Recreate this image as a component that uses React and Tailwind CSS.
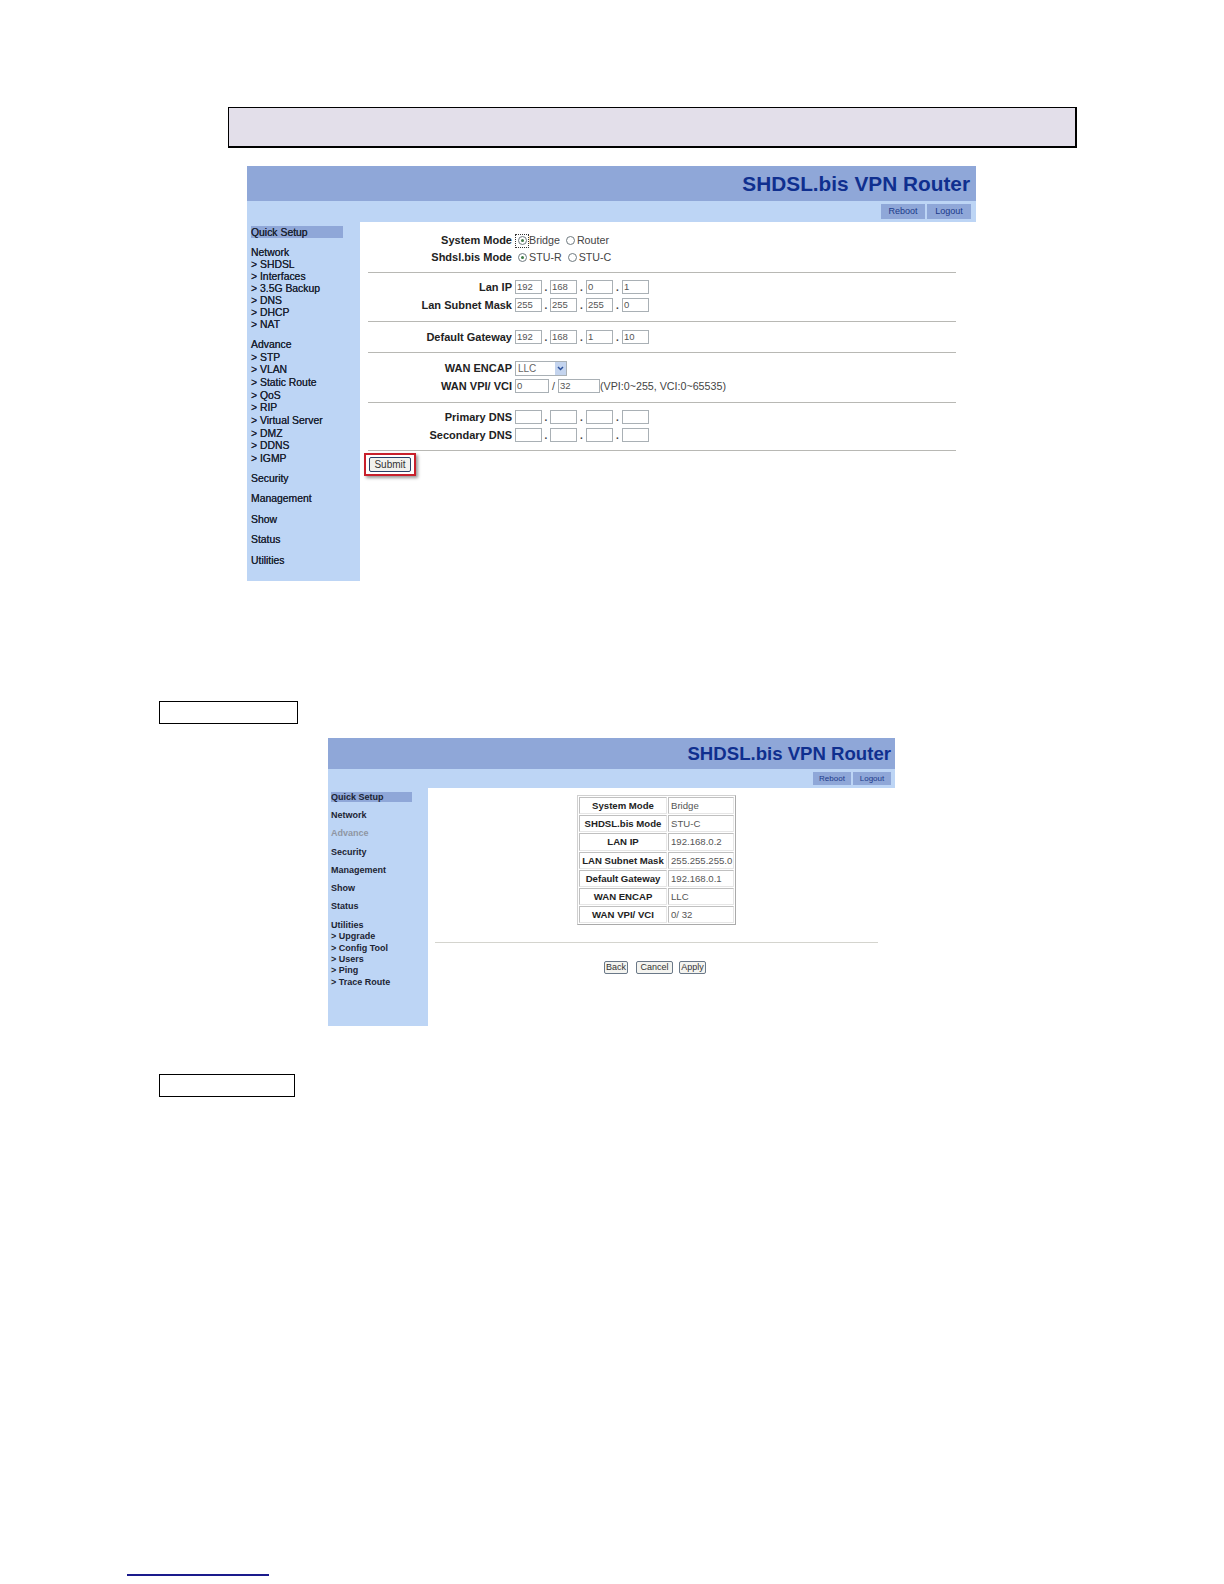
import React from "react";

const Divider = ({ className }) => <div className={`h-px w-[588px] bg-[#b8b8b4] ${className}`} />;

const Radio = ({ checked }) => (
    <span className="flex h-[9px] w-[9px] items-center justify-center rounded-full border border-[#6f7a80] bg-white">
        {checked && <span className="h-[3px] w-[3px] rounded-full bg-[#3f7a45]" />}
    </span>
);

const TextBox = ({ value, className = "w-[27px]" }) => (
    <div className={`h-[14px] border border-[#a9b0b5] bg-white pl-[1px] text-[9.5px] leading-[12px] text-[#555] ${className}`}>
        {value}
    </div>
);

const IpInput = ({ label, values = ["", "", "", ""] }) => (
    <div className="flex h-[18px] items-center">
        <div className="w-[144px] text-right text-[11px] font-bold text-[#222]">{label}</div>
        <div className="ml-[3px] flex items-center">
            <TextBox value={values[0]} />
            <span className="w-[8px] text-center text-[10px] font-bold">.</span>
            <TextBox value={values[1]} />
            <span className="w-[9px] text-center text-[10px] font-bold">.</span>
            <TextBox value={values[2]} />
            <span className="w-[9px] text-center text-[10px] font-bold">.</span>
            <TextBox value={values[3]} />
        </div>
    </div>
);

const SubItem = ({ children }) => <div>{"> "}{children}</div>;

const HeaderBar = ({ titleSize, headerHeight, barHeight, btnClass, titleClass, btnWidth, btnText }) => (
    <>
        <div className={`flex items-center justify-end bg-[#8fa7d8] ${headerHeight} ${titleClass}`}>
            <span className={`font-bold text-[#0f2f8f] ${titleSize}`}>SHDSL.bis VPN Router</span>
        </div>
        <div className={`flex items-center justify-end bg-[#bdd5f5] ${barHeight} ${btnClass}`}>
            <div className="flex h-full items-center gap-[2px]">
                <span className={`flex h-full items-center justify-center bg-[#8fa7d8] text-[#1c3a8a] ${btnWidth} ${btnText}`}>Reboot</span>
                <span className={`flex h-full items-center justify-center bg-[#8fa7d8] text-[#1c3a8a] ${btnWidth} ${btnText}`}>Logout</span>
            </div>
        </div>
    </>
);

const QuickSetupPage = () => (
    <div className="ml-[247px] mt-[18px] w-[729px]">
        <HeaderBar
            titleSize="text-[20.8px]"
            headerHeight="h-[35px]"
            barHeight="h-[21px] py-[3px]"
            btnClass="pr-[5px]"
            titleClass="pr-[6px]"
            btnWidth="w-[44px]"
            btnText="text-[9px]"
        />
        <div className="flex h-[359px]">
            {/* Sidebar */}
            <div className="w-[113px] bg-[#bdd5f5] pl-[4px] text-[10.4px] text-[#1c2433] [text-shadow:0_0_0.6px_#1c2433]">
                <div className="mt-[4px] h-[12px] w-[92px] bg-[#8fa7d8] pt-[1px] leading-[12px]">Quick Setup</div>
                <div className="mt-[9px] leading-[12px]">
                    <div>Network</div>
                    <SubItem>SHDSL</SubItem>
                    <SubItem>Interfaces</SubItem>
                    <SubItem>3.5G Backup</SubItem>
                    <SubItem>DNS</SubItem>
                    <SubItem>DHCP</SubItem>
                    <SubItem>NAT</SubItem>
                </div>
                <div className="mt-[8px] leading-[12.67px]">
                    <div>Advance</div>
                    <SubItem>STP</SubItem>
                    <SubItem>VLAN</SubItem>
                    <SubItem>Static Route</SubItem>
                    <SubItem>QoS</SubItem>
                    <SubItem>RIP</SubItem>
                    <SubItem>Virtual Server</SubItem>
                    <SubItem>DMZ</SubItem>
                    <SubItem>DDNS</SubItem>
                    <SubItem>IGMP</SubItem>
                </div>
                <div className="mt-[3px] leading-[20.5px]">
                    <div>Security</div>
                    <div>Management</div>
                    <div>Show</div>
                    <div>Status</div>
                    <div>Utilities</div>
                </div>
            </div>

            {/* Form */}
            <div className="flex-1 bg-white pl-[8px] text-[10.7px] text-[#444]">
                <div className="mt-[10px] flex h-[17px] items-center">
                    <div className="w-[144px] text-right text-[11px] font-bold text-[#222]">System Mode</div>
                    <div className="ml-[3px] flex h-[14px] w-[14px] items-center justify-center border border-dotted border-[#333]">
                        <Radio checked />
                    </div>
                    <span>Bridge</span>
                    <span className="ml-[6px]"><Radio /></span>
                    <span className="ml-[2px]">Router</span>
                </div>
                <div className="flex h-[17px] items-center">
                    <div className="w-[144px] text-right text-[11px] font-bold text-[#222]">Shdsl.bis Mode</div>
                    <span className="ml-[6px]"><Radio checked /></span>
                    <span className="ml-[2px]">STU-R</span>
                    <span className="ml-[6px]"><Radio /></span>
                    <span className="ml-[2px]">STU-C</span>
                </div>
                <Divider className="mt-[6px]" />
                <div className="mt-[5px]">
                    <IpInput label="Lan IP" values={["192", "168", "0", "1"]} />
                    <IpInput label="Lan Subnet Mask" values={["255", "255", "255", "0"]} />
                </div>
                <Divider className="mt-[7px]" />
                <div className="mt-[6px]">
                    <IpInput label="Default Gateway" values={["192", "168", "1", "10"]} />
                </div>
                <Divider className="mt-[6px]" />
                <div className="mt-[6px] flex h-[18px] items-center">
                    <div className="w-[144px] text-right text-[11px] font-bold text-[#222]">WAN ENCAP</div>
                    <div className="ml-[3px] flex h-[15px] w-[52px] items-center justify-between border border-[#a9b0b5] pl-[2px] text-[10px] text-[#666]">
                        LLC
                        <span className="flex h-full w-[11px] items-center justify-center bg-[#c4d4ee]">
                            <svg width="7" height="5" viewBox="0 0 7 5">
                                <path d="M1 1l2.5 2.5L6 1" fill="none" stroke="#2a4f9a" strokeWidth="1.5" />
                            </svg>
                        </span>
                    </div>
                </div>
                <div className="flex h-[18px] items-center">
                    <div className="w-[144px] text-right text-[11px] font-bold text-[#222]">WAN VPI/ VCI</div>
                    <TextBox value="0" className="ml-[3px] w-[34px]" />
                    <span className="w-[9px] text-center">/</span>
                    <TextBox value="32" className="w-[42px]" />
                    <span>(VPI:0~255, VCI:0~65535)</span>
                </div>
                <Divider className="mt-[7px]" />
                <div className="mt-[5px]">
                    <IpInput label="Primary DNS" />
                    <IpInput label="Secondary DNS" />
                </div>
                <Divider className="mt-[6px]" />
                {/* Highlighted button */}
                <div className="-ml-[4px] mt-[2px] flex h-[23px] w-[52px] items-center justify-center border-[2px] border-[#c8202c] shadow-[2px_2px_3px_rgba(0,0,0,0.4)]">
                    <span className="flex h-[15px] w-[42px] items-center justify-center rounded-[2px] border border-[#2a3f66] bg-[#f2f2ee] text-[10px] text-[#333]">
                        Submit
                    </span>
                </div>
            </div>
        </div>
    </div>
);

const summaryRows = [
    ["System Mode", "Bridge"],
    ["SHDSL.bis Mode", "STU-C"],
    ["LAN IP", "192.168.0.2"],
    ["LAN Subnet Mask", "255.255.255.0"],
    ["Default Gateway", "192.168.0.1"],
    ["WAN ENCAP", "LLC"],
    ["WAN VPI/ VCI", "0/ 32"],
];

const SmallButton = ({ children, className }) => (
    <span className={`flex h-[13px] items-center justify-center rounded-[2px] border border-[#6a7888] bg-[#f4f4f0] text-[9px] text-[#333] ${className}`}>
        {children}
    </span>
);

const ConfirmPage = () => (
    <div className="ml-[328px] mt-[14px] w-[567px]">
        <HeaderBar
            titleSize="text-[18.6px]"
            headerHeight="h-[31px]"
            barHeight="h-[19px] py-[3px]"
            btnClass="pr-[4px]"
            titleClass="pr-[4px]"
            btnWidth="w-[38px]"
            btnText="text-[8px]"
        />
        <div className="flex h-[238px]">
            <div className="w-[100px] bg-[#bdd5f5] pl-[3px] text-[9px] font-bold text-[#1c2433]">
                <div className="mt-[4px] h-[10px] w-[81px] bg-[#8fa7d8] leading-[10px]">Quick Setup</div>
                <div className="mt-[4px] leading-[18.3px]">
                    <div>Network</div>
                    <div className="text-[#8f95a3]">Advance</div>
                    <div>Security</div>
                    <div>Management</div>
                    <div>Show</div>
                    <div>Status</div>
                </div>
                <div className="mt-[4px] leading-[11.4px]">
                    <div>Utilities</div>
                    <SubItem>Upgrade</SubItem>
                    <SubItem>Config Tool</SubItem>
                    <SubItem>Users</SubItem>
                    <SubItem>Ping</SubItem>
                    <SubItem>Trace Route</SubItem>
                </div>
            </div>

            <div className="flex-1 bg-white pl-[7px]">
                <table className="ml-[142px] mt-[7px] w-[159px] border-separate border-spacing-[1px] border border-[#d0d0d0] border-r-[#aaa] border-b-[#aaa] text-[9.6px] leading-[11px]">
                    <tbody>
                        {summaryRows.map(([label, value]) => (
                            <tr key={label} className="h-[17.2px]">
                                <td className="w-[88px] border border-[#e6e6e6] border-t-[#c0c0c0] border-l-[#c0c0c0] p-0 text-center font-bold text-[#222]">
                                    {label}
                                </td>
                                <td className="border border-[#e6e6e6] border-t-[#c0c0c0] border-l-[#c0c0c0] pl-[2px] text-[#555]">
                                    {value}
                                </td>
                            </tr>
                        ))}
                    </tbody>
                </table>
                <div className="mt-[17px] h-px w-[443px] bg-[#d4d4ce]" />
                <div className="ml-[169px] mt-[18px] flex">
                    <SmallButton className="w-[24px]">Back</SmallButton>
                    <SmallButton className="ml-[8px] w-[37px]">Cancel</SmallButton>
                    <SmallButton className="ml-[6px] w-[27px]">Apply</SmallButton>
                </div>
            </div>
        </div>
    </div>
);

const App = () => {
    return (
        <div className="h-[1584px] w-[1224px] overflow-hidden bg-white pt-[107px] font-['Liberation_Sans',Arial,sans-serif]">
            <div className="ml-[228px] h-[41px] w-[849px] border border-b-[2px] border-r-[2px] border-black bg-[#e3dfea]" />
            <QuickSetupPage />
            <div className="ml-[159px] mt-[120px] h-[23px] w-[139px] border border-black" />
            <ConfirmPage />
            <div className="ml-[159px] mt-[48px] h-[23px] w-[136px] border border-black" />
            <div className="ml-[127px] mt-[477px] h-[2px] w-[142px] bg-[#1a1a8c]" />
        </div>
    );
};

export default App;
